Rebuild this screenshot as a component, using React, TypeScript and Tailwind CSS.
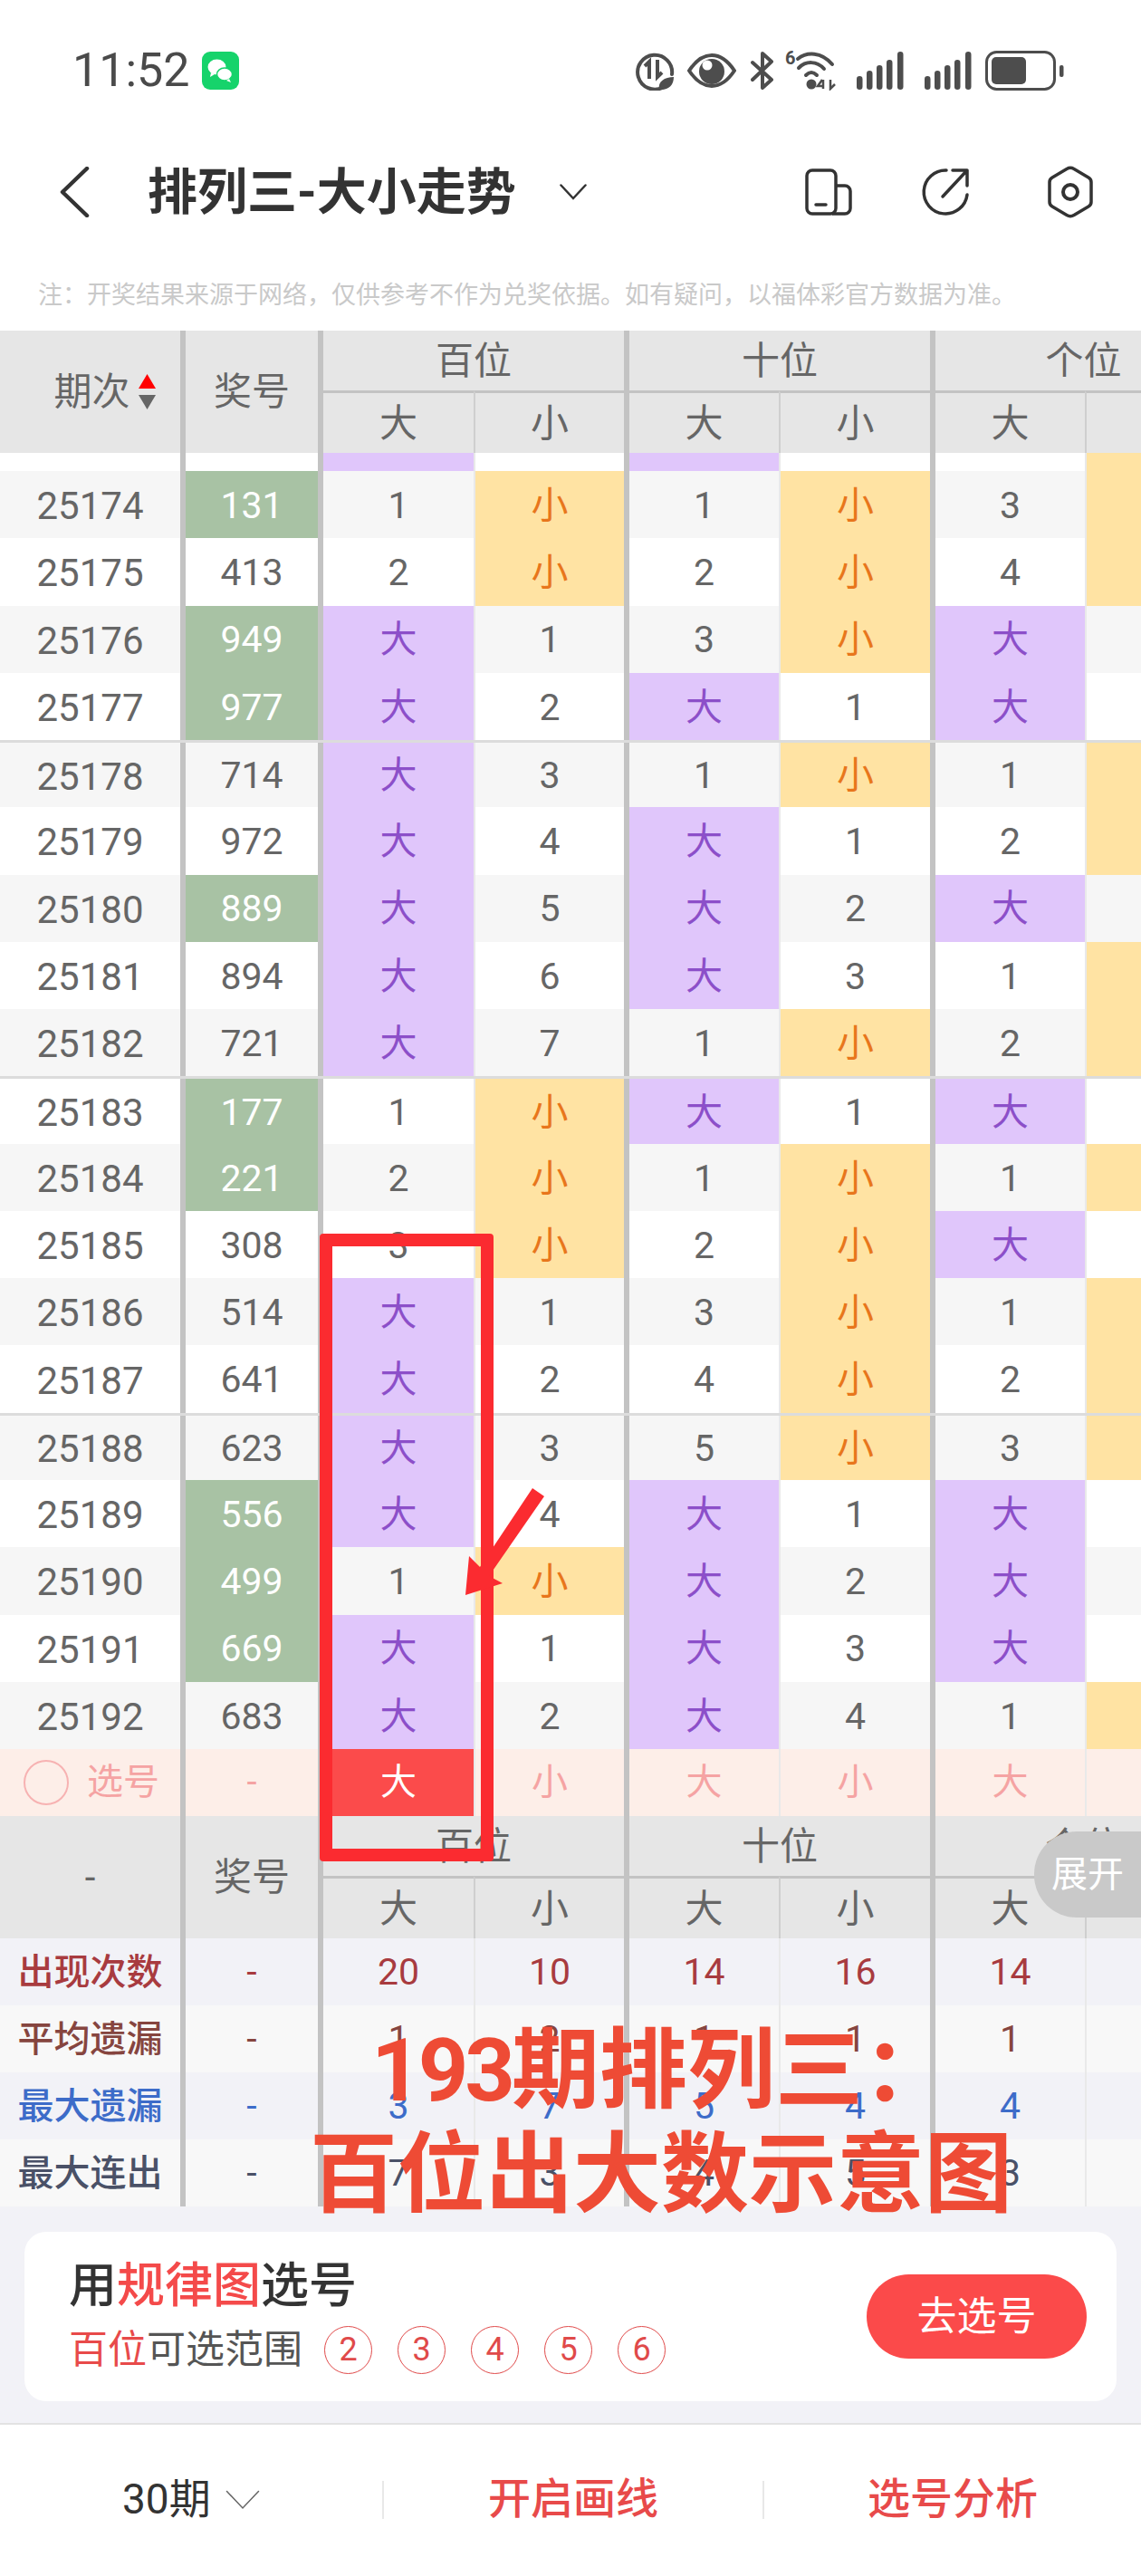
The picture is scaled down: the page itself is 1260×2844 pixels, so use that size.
import React from "react";

const FONT = "font-['Roboto','Noto_Sans_CJK_SC',sans-serif]";
const TRACKS = "grid grid-cols-[199px_152px_172px_166px_171px_167px_171px_162px]";

// [period, number, green, hundreds big, hundreds small, tens big, tens small, units big, units small yellow]
const ROWS: [string, string, boolean, string, string, string, string, string, boolean][] = [
  ["25174", "131", true, "1", "小", "1", "小", "3", true],
  ["25175", "413", false, "2", "小", "2", "小", "4", true],
  ["25176", "949", true, "大", "1", "3", "小", "大", false],
  ["25177", "977", true, "大", "2", "大", "1", "大", false],
  ["25178", "714", false, "大", "3", "1", "小", "1", true],
  ["25179", "972", false, "大", "4", "大", "1", "2", true],
  ["25180", "889", true, "大", "5", "大", "2", "大", false],
  ["25181", "894", false, "大", "6", "大", "3", "1", true],
  ["25182", "721", false, "大", "7", "1", "小", "2", true],
  ["25183", "177", true, "1", "小", "大", "1", "大", false],
  ["25184", "221", true, "2", "小", "1", "小", "1", true],
  ["25185", "308", false, "3", "小", "2", "小", "大", false],
  ["25186", "514", false, "大", "1", "3", "小", "1", true],
  ["25187", "641", false, "大", "2", "4", "小", "2", true],
  ["25188", "623", false, "大", "3", "5", "小", "3", true],
  ["25189", "556", true, "大", "4", "大", "1", "大", false],
  ["25190", "499", true, "1", "小", "大", "2", "大", false],
  ["25191", "669", true, "大", "1", "大", "3", "大", false],
  ["25192", "683", false, "大", "2", "大", "4", "1", true],
];

const STATS = [
  { label: "出现次数", color: "text-[#a83b3f]", bg: "bg-[#f2f2f7]", values: ["20", "10", "14", "16", "14"] },
  { label: "平均遗漏", color: "text-[#86453f]", bg: "bg-[#f8f8f8]", values: ["1", "2", "1", "1", "1"] },
  { label: "最大遗漏", color: "text-[#3d6cc9]", bg: "bg-[#f2f2f7]", values: ["3", "7", "5", "4", "4"] },
  { label: "最大连出", color: "text-[#4a5167]", bg: "bg-[#f8f8f8]", values: ["7", "3", "4", "5", "3"] },
];

const THICK = "border-l-[6px] border-[#c3c3c3]";
const THIN = "border-l-2 border-[#e9e9e9]";

function Cell({ value, thick }: { value: string; thick?: boolean }) {
  const big = value === "大";
  const small = value === "小";
  return (
    <div
      className={`flex items-center justify-center pt-[3px] ${thick ? THICK : THIN} ${
        big ? "bg-[#e0c6fb] text-[#8c4fc9]" : small ? "bg-[#ffe3a3] text-[#e8761c]" : ""
      }`}
    >
      {value}
    </div>
  );
}

function DataRow({ row, index }: { row: (typeof ROWS)[number]; index: number }) {
  const [period, num, green, a, b, c, d, e, yellow] = row;
  const sep = index === 4 || index === 9 || index === 14;
  return (
    <div
      className={`${TRACKS} h-[74.28px] ${index % 2 === 0 ? "bg-[#f6f6f6]" : "bg-white"} ${
        sep ? "border-t-[3px] border-[#dcdcdc]" : ""
      }`}
    >
      <div className="flex items-center justify-center pt-[3px] text-[42px]">{period}</div>
      <div className={`flex items-center justify-center ${THICK} ${green ? "text-white" : ""}`}>
        <span className={`flex h-full w-full items-center justify-center pt-[3px] ${green ? "bg-[#a8c2a4]" : ""}`}>{num}</span>
      </div>
      <Cell value={a} thick />
      <Cell value={b} />
      <Cell value={c} thick />
      <Cell value={d} />
      <Cell value={e} thick />
      <div className={`${THIN} ${yellow ? "bg-[#ffe3a3]" : ""}`} />
    </div>
  );
}

function TableHeader({ first }: { first: React.ReactNode }) {
  return (
    <div className={`${TRACKS} grid-rows-[66px_69px] bg-[#e6e6e6] text-[42px] text-[#666]`}>
      <div className="row-span-2 flex items-center justify-center">{first}</div>
      <div className={`row-span-2 flex items-center justify-center ${THICK}`}>奖号</div>
      <div className={`col-span-2 flex items-center justify-center ${THICK}`}>百位</div>
      <div className={`col-span-2 flex items-center justify-center ${THICK}`}>十位</div>
      <div className={`col-span-2 flex items-center justify-center ${THICK}`}>个位</div>
      {["大", "小", "大", "小", "大", ""].map((t, i) => (
        <div
          key={i}
          className={`flex items-center justify-center border-t-[3px] border-t-[#c3c3c3] ${
            i % 2 === 0 ? "border-l-[6px] border-l-[#c3c3c3]" : "border-l-2 border-l-[#cfcfcf]"
          }`}
        >
          {t}
        </div>
      ))}
    </div>
  );
}

function StatusIcons() {
  return (
    <div className="flex items-center">
      <svg width="44" height="44" viewBox="0 0 44 44" fill="none">
        <path d="M30 40.5 A19 19 0 1 1 40 26" stroke="#4d4d4d" strokeWidth="4" strokeLinecap="round" />
        <path d="M15 31V12l-5 5M15 12" stroke="#4d4d4d" strokeWidth="4" />
        <path d="M24 10v19l5-5" stroke="#4d4d4d" strokeWidth="4" />
        <path d="M26 43c-2-9 6-14 16-14 0 9-6 15-16 14Z" fill="#4d4d4d" />
      </svg>
      <svg width="54" height="38" viewBox="0 0 54 38" fill="none" className="ml-[13px]">
        <path d="M2 19C10 7 18 2 27 2s17 5 25 17c-8 12-16 17-25 17S10 31 2 19Z" stroke="#4d4d4d" strokeWidth="4" />
        <circle cx="27" cy="20" r="14" fill="#4d4d4d" />
        <circle cx="22" cy="13" r="5.5" fill="#fff" />
      </svg>
      <svg width="26" height="42" viewBox="0 0 26 42" fill="none" className="ml-[16px]">
        <path
          d="M2 12 23 31 13 40V24M13 18V2L23 11 2 31"
          stroke="#4d4d4d"
          strokeWidth="4"
          strokeLinecap="round"
          strokeLinejoin="round"
        />
      </svg>
      <div className="relative ml-[12px] h-[44px] w-[58px]">
        <span className="absolute left-0 top-[-4px] font-['Roboto'] text-[20px] font-bold leading-[24px] text-[#4d4d4d]">6</span>
        <svg width="58" height="44" viewBox="0 0 58 44" fill="none" className="absolute inset-0">
          <path d="M14 9C24 1 40 1 52 15" stroke="#4d4d4d" strokeWidth="4" strokeLinecap="round" />
          <path d="M15 19C23 11 35 11 43 20" stroke="#4d4d4d" strokeWidth="4" strokeLinecap="round" />
          <path d="M23 27C27 23 31 23 35 27" stroke="#4d4d4d" strokeWidth="4" strokeLinecap="round" />
          <circle cx="29" cy="37" r="5.5" fill="#4d4d4d" />
          <path d="M42 32v10M41 32l-5 7h6M50 32v10l5-5" stroke="#4d4d4d" strokeWidth="2.5" />
        </svg>
      </div>
      {[0, 1].map((n) => (
        <svg key={n} width="52" height="42" viewBox="0 0 52 42" className={n === 0 ? "ml-[21px]" : "ml-[23px]"}>
          <rect x="0" y="27" width="6.5" height="15" rx="3.2" fill="#4d4d4d" />
          <rect x="11" y="21" width="6.5" height="21" rx="3.2" fill="#4d4d4d" />
          <rect x="22" y="15" width="6.5" height="27" rx="3.2" fill="#4d4d4d" />
          <rect x="33" y="9" width="6.5" height="33" rx="3.2" fill="#4d4d4d" />
          <rect x="45" y="0" width="6.5" height="42" rx="3.2" fill="#4d4d4d" />
        </svg>
      ))}
      <svg width="88" height="44" viewBox="0 0 88 44" fill="none" className="ml-[15px]">
        <rect x="1.5" y="1.5" width="75" height="41" rx="11" stroke="#4d4d4d" strokeWidth="3" />
        <rect x="7" y="7" width="38" height="30" rx="5" fill="#4d4d4d" />
        <rect x="82" y="16" width="4.5" height="13" rx="2" fill="#4d4d4d" />
      </svg>
    </div>
  );
}

export default function App() {
  return (
    <div className={`relative h-[2844px] w-[1260px] overflow-hidden bg-white ${FONT}`}>
      {/* status bar */}
      <div className="flex h-[156px] items-center justify-between pl-[80px] pr-[84px]">
        <div className="flex items-center gap-[13px]">
          <span className="text-[52px] leading-none text-[#4a4a4a]">11:52</span>
          <div className="flex h-[42px] w-[41px] items-center justify-center rounded-[9px] bg-[#16d36b]">
            <svg width="30" height="28" viewBox="0 0 30 28" fill="#fff">
              <ellipse cx="11.5" cy="10" rx="10" ry="8.5" />
              <path d="M5 16l-1 5 5-3Z" />
              <ellipse cx="20" cy="18" rx="8.5" ry="7" stroke="#16d36b" strokeWidth="1.5" />
              <path d="M25 23l2 4-5-2Z" />
            </svg>
          </div>
        </div>
        <StatusIcons />
      </div>

      {/* nav */}
      <div className="flex h-[112px] items-center pl-[65px] pr-[52px]">
        <svg width="34" height="56" viewBox="0 0 34 56" fill="none">
          <path d="M31 2 4 28l27 26" stroke="#333" strokeWidth="4.5" strokeLinecap="round" strokeLinejoin="round" />
        </svg>
        <h1 className="ml-[64px] text-[55px] font-bold leading-none text-[#333]">排列三-大小走势</h1>
        <svg width="30" height="18" viewBox="0 0 30 18" fill="none" className="ml-[48px]">
          <path d="M1.5 1.5 15 16 28.5 1.5" stroke="#333" strokeWidth="2.5" strokeLinecap="round" />
        </svg>
        <div className="ml-auto flex items-center">
          <svg width="52" height="52" viewBox="0 0 52 52" fill="none">
            <rect x="2" y="2" width="32" height="48" rx="6" stroke="#333" strokeWidth="3.5" />
            <path d="M34 19h10a6 6 0 0 1 6 6v19a6 6 0 0 1-6 6H30" stroke="#333" strokeWidth="3.5" />
            <path d="M12 40h11" stroke="#333" strokeWidth="3.5" strokeLinecap="round" />
          </svg>
          <svg width="54" height="54" viewBox="0 0 54 54" fill="none" className="ml-[76px]">
            <path d="M28 3A24 24 0 1 0 51 30" stroke="#333" strokeWidth="3.5" strokeLinecap="round" />
            <path d="M24 32 51 3M35 3h16v17" stroke="#333" strokeWidth="3.5" strokeLinecap="round" strokeLinejoin="round" />
          </svg>
          <svg width="52" height="58" viewBox="0 0 52 58" fill="none" className="ml-[85px]">
            <path
              d="M22 3.5a8 8 0 0 1 8 0l16 9.5a6 6 0 0 1 3 5.500v21a6 6 0 0 1-3 5.500l-16 9.500a8 8 0 0 1-8 0L6 45a6 6 0 0 1-3-5.500v-21A6 6 0 0 1 6 13Z"
              stroke="#333"
              strokeWidth="3.5"
            />
            <circle cx="26" cy="29" r="8" stroke="#333" strokeWidth="4" />
          </svg>
        </div>
      </div>

      <p className="h-[97px] pl-[42px] pt-[40px] text-[27px] leading-[36px] text-[#c9c9c9]">
        注：开奖结果来源于网络，仅供参考不作为兑奖依据。如有疑问，以福体彩官方数据为准。
      </p>

      {/* trend table */}
      <TableHeader
        first={
          <div className="ml-[32px] flex items-center gap-[9px]">
            <span>期次</span>
            <span className="flex flex-col gap-[7px]">
              <svg width="19" height="16" viewBox="0 0 19 16"><path d="M9.500 0 19 16H0Z" fill="#f00" /></svg>
              <svg width="19" height="16" viewBox="0 0 19 16"><path d="M9.500 16 19 0H0Z" fill="#666" /></svg>
            </span>
          </div>
        }
      />
      <div className={`${TRACKS} h-[20px] bg-white`}>
        <div />
        <div className={THICK} />
        <div className={`${THICK} bg-[#e0c6fb]`} />
        <div className={THIN} />
        <div className={`${THICK} bg-[#e0c6fb]`} />
        <div className={THIN} />
        <div className={THICK} />
        <div className={`${THIN} bg-[#ffe3a3]`} />
      </div>
      <div className="text-[41px] text-[#666]">
        {ROWS.map((row, i) => (
          <DataRow key={row[0]} row={row} index={i} />
        ))}
      </div>

      {/* pick row */}
      <div className={`${TRACKS} h-[74px] bg-[#fdeee8] text-[40px] text-[#f5a3a3]`}>
        <div className="flex items-center pl-[26px]">
          <span className="h-[50px] w-[50px] rounded-full border-2 border-[#f7b2b2]" />
          <span className="ml-[20px]">选号</span>
        </div>
        <div className={`flex items-center justify-center ${THICK}`}>-</div>
        <div className={`flex items-center justify-center ${THICK}`}>
          <span className="flex h-full w-full items-center justify-center bg-[#fb4b4b] text-white">大</span>
        </div>
        <div className={`flex items-center justify-center ${THIN}`}>小</div>
        <div className={`flex items-center justify-center ${THICK}`}>大</div>
        <div className={`flex items-center justify-center ${THIN}`}>小</div>
        <div className={`flex items-center justify-center ${THICK}`}>大</div>
        <div className={THIN} />
      </div>

      <TableHeader first={<span>-</span>} />

      {/* stats */}
      <div className="text-[41px]">
        {STATS.map((s) => (
          <div key={s.label} className={`${TRACKS} h-[74px] ${s.bg} ${s.color}`}>
            <div className="flex items-center justify-center pt-[2px] text-[40px] font-medium">{s.label}</div>
            <div className={`flex items-center justify-center pt-[2px] ${THICK}`}>-</div>
            {s.values.map((v, i) => (
              <div key={i} className={`flex items-center justify-center pt-[2px] ${i % 2 === 0 ? THICK : THIN}`}>
                {v}
              </div>
            ))}
            <div className={THIN} />
          </div>
        ))}
      </div>

      {/* rule card */}
      <div className="h-[241px] border-b-2 border-[#e2e2e2] bg-[#f2f2f7] px-[27px] pt-[28px]">
        <div className="flex h-[187px] items-center justify-between rounded-[24px] bg-white pl-[49px] pr-[33px]">
          <div>
            <div className="text-[53px] font-medium leading-[62px] text-[#333]">
              用<span className="text-[#f44a4a]">规律图</span>选号
            </div>
            <div className="mt-[11px] flex items-center text-[43px] leading-[56px] text-[#555]">
              <span className="text-[#e84a4a]">百位</span>可选范围
              <div className="ml-[24px] flex gap-[28px]">
                {["2", "3", "4", "5", "6"].map((n) => (
                  <span
                    key={n}
                    className="flex h-[53px] w-[53px] items-center justify-center rounded-full border border-[#e04a4a] text-[36px] text-[#e04a4a]"
                  >
                    {n}
                  </span>
                ))}
              </div>
            </div>
          </div>
          <button className="h-[93px] w-[243px] rounded-full bg-[#fb4a4a] text-[44px] text-white">去选号</button>
        </div>
      </div>

      {/* bottom bar */}
      <div className="flex h-[165px] items-center">
        <div className="flex w-[422px] items-center pl-[135px] text-[46px] text-[#333]">
          30期
          <svg width="38" height="22" viewBox="0 0 38 22" fill="none" className="ml-[16px]">
            <path d="M1.500 1.500 19 20 36.500 1.500" stroke="#666" strokeWidth="1.5" strokeLinecap="round" />
          </svg>
        </div>
        <div className="flex h-[42px] w-[420px] items-center justify-center border-l-2 border-[#e8e8e8] text-[47px] font-medium text-[#e84a4a]">
          开启画线
        </div>
        <div className="flex h-[42px] w-[418px] items-center justify-center border-l-2 border-[#e8e8e8] text-[47px] font-medium text-[#e84a4a]">
          选号分析
        </div>
      </div>

      {/* expand tab */}
      <div className="absolute left-[1142px] top-[2022px] flex h-[95px] w-[118px] items-center justify-center rounded-l-[47px] bg-[#c9c9c9] text-[40px] text-white">
        展开
      </div>

      {/* annotation drawn over the screenshot */}
      <div className="absolute left-[353px] top-[1362px] h-[693px] w-[192px] rounded-[4px] border-[14px] border-[#fb2b30]" />
      <svg width="110" height="130" viewBox="0 0 110 130" fill="none" className="absolute left-[505px] top-[1640px]">
        <path d="M83 3 96 12 35 100 50 108 9 121 13 78 25 90Z" fill="#fb2b30" />
      </svg>
      <div className="absolute left-[342px] top-[2229px] w-[790px] text-[97px] font-bold leading-[115px] text-[#ee4b35]">
        <div className="whitespace-nowrap pl-[68px]">
          <span className="tracking-[-4px]">193</span>期排列三：
        </div>
        <div className="whitespace-nowrap">百位出大数示意图</div>
      </div>
    </div>
  );
}
